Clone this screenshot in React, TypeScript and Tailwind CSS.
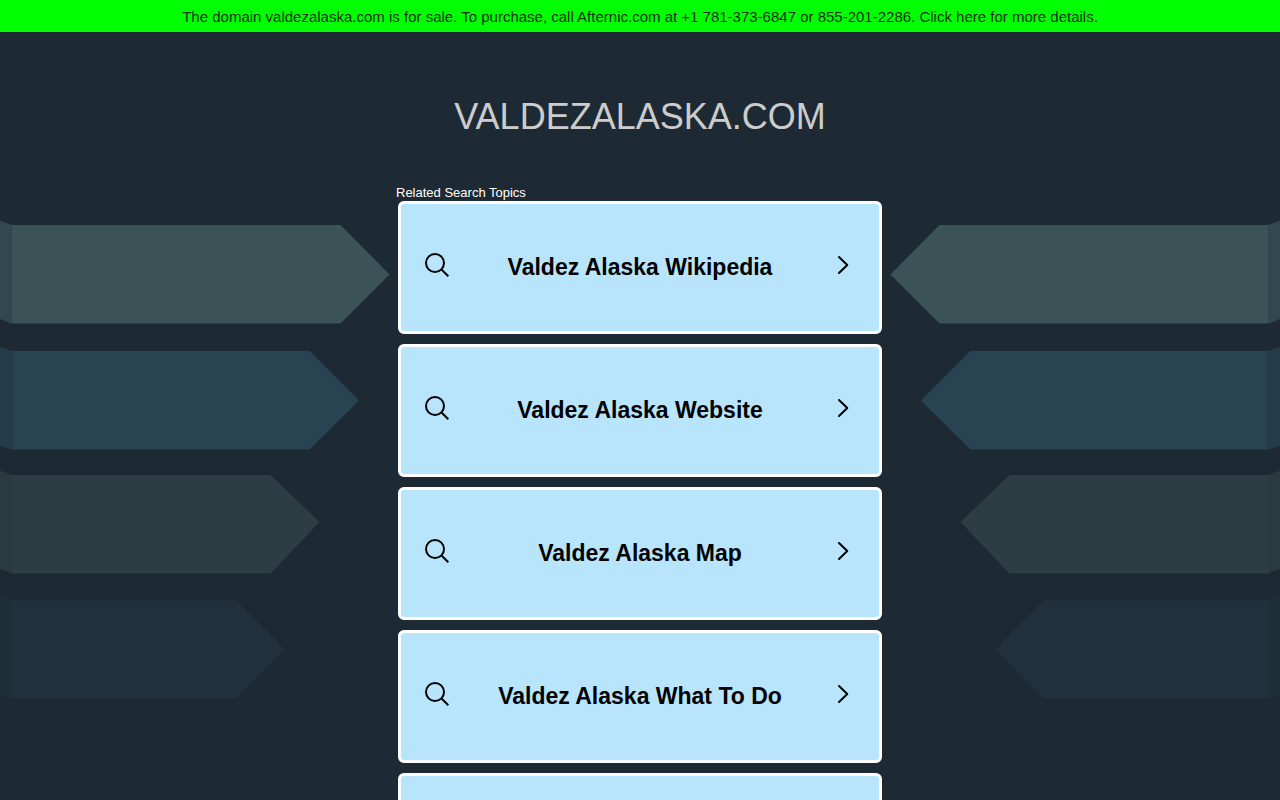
const topics = [
  "Valdez Alaska Wikipedia",
  "Valdez Alaska Website",
  "Valdez Alaska Map",
  "Valdez Alaska What To Do",
  "Valdez Alaska Hotels",
];

const SearchIcon = () => (
  <svg className="w-6 h-6 shrink-0" viewBox="0 0 24 24" fill="none" stroke="#000" strokeWidth="2" aria-hidden="true">
    <circle cx="10" cy="10" r="9" />
    <path d="M16.5 16.5L23.3 23.3" />
  </svg>
);

const ChevronIcon = () => (
  <svg className="w-6 h-6 shrink-0" viewBox="0 0 24 24" fill="none" stroke="#000" strokeWidth="2" strokeLinecap="round" strokeLinejoin="round" aria-hidden="true">
    <path d="M8 4L16.300 12L8 20" />
  </svg>
);

// ribbons that point at the list from the edge of the window
const Ribbons = ({ className }: { className: string }) => (
  <svg className={className} width="390" height="490" viewBox="0 0 390 490" aria-hidden="true">
    <path d="M0 8.500L11.500 13V111.500L0 107Z" fill="#33474f" />
    <path d="M11.500 13H340.500L389.500 62.500L340.500 111.500H11.500Z" fill="#3b5357" />
    <path d="M0 135L12.500 139V237.500L0 234Z" fill="#253d4a" />
    <path d="M12.500 139H309.500L359 188.500L309.500 237.500H12.500Z" fill="#284452" />
    <path d="M0 258.500L12 263V361.500L0 357Z" fill="#293b41" />
    <path d="M12 263H270.500L319.500 310L270.500 361.500H12Z" fill="#2c3e44" />
    <path d="M0 384L12 388.500V486.500L0 482Z" fill="#1f2f39" />
    <path d="M12 388.500H236.500L285 437.500L236.500 486.500H12Z" fill="#20313d" />
  </svg>
);

const TopicCard = ({ title }: { title: string }) => (
  <li>
    <a
      href="#"
      className="flex items-center h-[133px] px-6 pb-1.5 rounded-md border-[3px] border-white bg-[#b8e4fc] text-black hover:bg-[#a5daf8]"
    >
      <SearchIcon />
      <span className="flex-1 pt-1 text-center text-[23px] leading-8 font-bold">{title}</span>
      <ChevronIcon />
    </a>
  </li>
);

const App = () => {
  return (
    <div className="relative min-h-screen overflow-hidden bg-[#1e2a33] font-['Liberation_Sans',Arial,sans-serif]">
      <a href="#" className="block bg-[#00ff00] pt-[7px] pb-[5px] text-center text-[15px] leading-5 text-[#14320a]">
        The domain valdezalaska.com is for sale. To purchase, call Afternic.com at +1 781-373-6847 or 855-201-2286. Click here for more details.
      </a>

      <Ribbons className="absolute left-0 top-[212px]" />
      <Ribbons className="absolute right-0 top-[212px] -scale-x-100" />

      <main className="relative mx-auto max-w-[488px] pb-10">
        <h1 className="pt-[65px] text-center text-4xl leading-10 text-[#cccccc]">VALDEZALASKA.COM</h1>
        <h2 className="mt-12 text-[13px] leading-4 text-white">Related Search Topics</h2>
        <ul className="flex flex-col gap-2.5 px-0.5">
          {topics.map((title) => (
            <TopicCard key={title} title={title} />
          ))}
        </ul>
      </main>
    </div>
  );
};

export default App;
